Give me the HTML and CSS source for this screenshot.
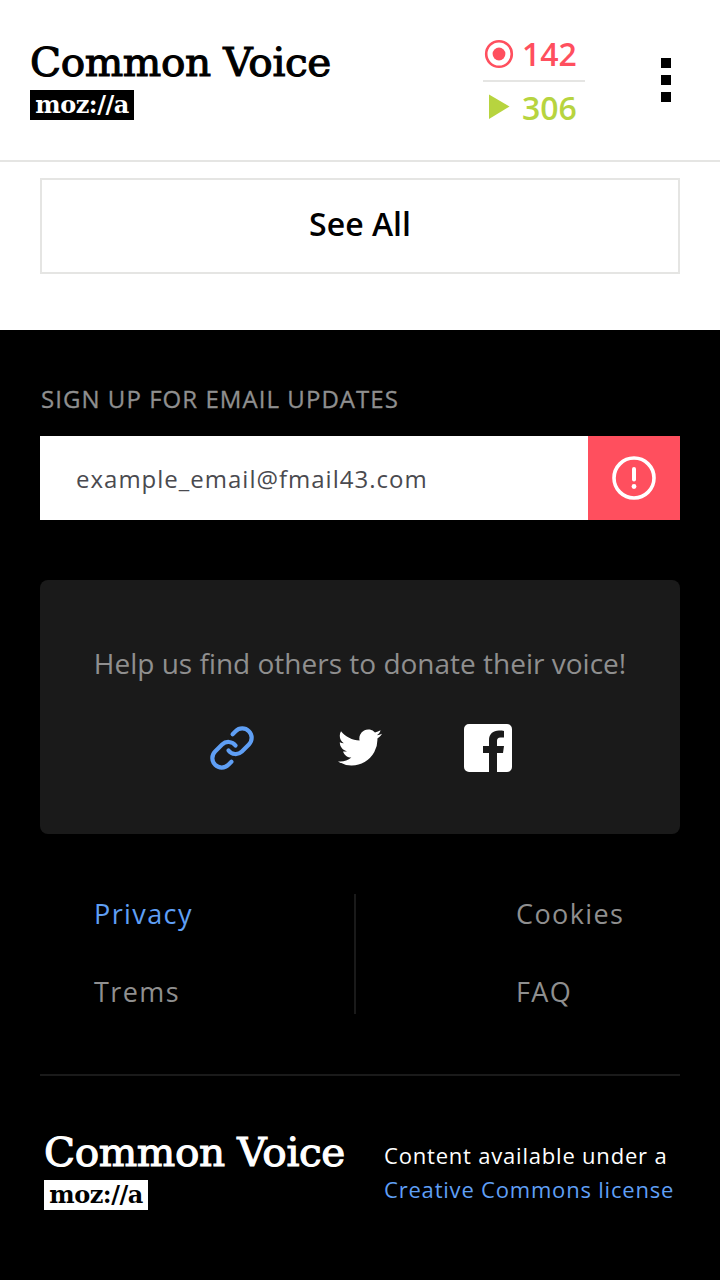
FILE: index.html
```html
<!DOCTYPE html>
<html lang="en">
<head>
  <meta charset="UTF-8" />
  <meta name="viewport" content="width=device-width, initial-scale=1.0" />
  <title>Common Voice</title>
  <link rel="stylesheet" href="styles.css">
</head>
<body>
  <header class="top">
    <div class="logo">
      <div class="logoName">Common Voice</div>
      <div class="logoMoz">moz://a</div>
    </div>
    <div class="stats">
      <div class="stat statRec">
        <svg class="statIcon" width="30" height="30" viewBox="0 0 30 30"><circle cx="15" cy="15" r="12.800" fill="none" stroke="#ff4f5e" stroke-width="2.600"/><circle cx="15" cy="15" r="6.400" fill="#ff4f5e"/></svg>
        <span>142</span>
      </div>
      <div class="stat statPlay">
        <svg class="statIcon" width="30" height="30" viewBox="0 0 30 30"><polygon points="5,2.500 25.500,14.500 5,27" fill="#b7d43f"/></svg>
        <span>306</span>
      </div>
    </div>
    <div class="dots"><i></i><i></i><i></i></div>
  </header>

  <section class="seeAllWrap">
    <button class="seeAll">See All</button>
  </section>

  <footer class="foot">
    <div class="signTitle">SIGN UP FOR EMAIL UPDATES</div>
    <div class="signRow">
      <div class="signInput">example_email@fmail43.com</div>
      <div class="signBtn">
        <svg width="44" height="44" viewBox="0 0 44 44"><circle cx="22" cy="22" r="20" fill="none" stroke="#fff" stroke-width="3.600"/><rect x="20" y="11" width="4" height="14.500" rx="2" fill="#fff"/><circle cx="22" cy="30.500" r="2.400" fill="#fff"/></svg>
      </div>
    </div>

    <div class="share">
      <p>Help us find others to donate their voice!</p>
      <div class="shareIcons">
        <svg width="48" height="48" viewBox="0 0 48 48" fill="none" stroke="#5f9ff5" stroke-width="4.200" stroke-linecap="round"><path d="M20.500 26.500a9 9 0 0 0 13.400 1l7-7a9.400 9.400 0 0 0-13.300-13.300l-3 3"/><path d="M27.500 21.500a9 9 0 0 0-13.400-1l-7 7a9.400 9.400 0 0 0 13.300 13.300l3-3"/></svg>
        <svg width="48" height="48" viewBox="0 0 24 24"><path fill="#fff" d="M23 4.900c-.8.400-1.700.600-2.600.700.900-.6 1.600-1.400 1.900-2.500-.9.500-1.800.900-2.800 1.100A4.500 4.500 0 0 0 11.800 8.300C8.100 8.100 4.700 6.300 2.500 3.600c-1.200 2.100-.6 4.700 1.400 6-.7 0-1.400-.2-2-.5 0 2.200 1.500 4.100 3.600 4.500-.7.200-1.400.2-2 .1.600 1.800 2.300 3.100 4.200 3.100A9 9 0 0 1 1 18.700a12.800 12.800 0 0 0 19.700-11.400c.9-.6 1.700-1.400 2.300-2.400z"/></svg>
        <svg width="48" height="48" viewBox="0 0 48 48"><path fill="#fff" d="M5 0h38a5 5 0 0 1 5 5v38a5 5 0 0 1-5 5H33V29h6l1-7h-7v-5c0-2 1-3.500 3.500-3.500H40V7c-1-.2-3-.4-5-.4-6 0-10 3.400-10 9.800V22h-6v7h6v19H5a5 5 0 0 1-5-5V5a5 5 0 0 1 5-5z"/></svg>
      </div>
    </div>

    <nav class="links">
      <div class="linkCol">
        <a class="active">Privacy</a>
        <a>Trems</a>
      </div>
      <div class="linkCol linkColRight">
        <a>Cookies</a>
        <a>FAQ</a>
      </div>
    </nav>

    <div class="bottom">
      <div class="logo logoDark">
        <div class="logoName">Common Voice</div>
        <div class="logoMoz">moz://a</div>
      </div>
      <p class="license">Content available under a <a>Creative Commons license</a></p>
    </div>
  </footer>
</body>
</html>
```

FILE: styles.css
```css
* {
  box-sizing: border-box;
  margin: 0;
  padding: 0;
}

html, body {
  background: #fff;
  font-family: 'Open Sans', sans-serif;
  color: #000;
}

body {
  width: 720px;
  height: 1280px;
  overflow: hidden;
}

.top {
  height: 162px;
  border-bottom: 2px solid #e5e5e3;
  display: flex;
  align-items: flex-start;
  padding: 40px 0 0 30px;
}

.logo {
  width: 301px;
  flex-shrink: 0;
}

.logoName {
  font-family: 'DejaVu Serif', serif;
  font-weight: 400;
  font-size: 40px;
  line-height: 44px;
  white-space: nowrap;
  -webkit-text-stroke: 1.1px currentColor;
  transform: scaleX(1.015);
  transform-origin: left center;
  letter-spacing: -.4px;
}

.logoMoz {
  width: 104px;
  height: 30px;
  margin-top: 6px;
  background: #000;
  color: #fff;
  font-family: 'DejaVu Serif', serif;
  font-weight: 700;
  font-size: 24px;
  line-height: 29px;
  text-align: center;
  white-space: nowrap;
  letter-spacing: -.5px;
}

.logoDark .logoName { color: #fff; }

.logoDark .logoMoz {
  background: #fff;
  color: #000;
}

.stats {
  width: 102px;
  margin-left: 152px;
  margin-top: -14px;
}

.stat {
  height: 54px;
  display: flex;
  align-items: center;
  font-size: 32px;
  font-weight: 600;
  padding-left: 1px;
  gap: 8px;
}

.statRec {
  color: #ff4f5e;
  height: 56px;
  padding-top: 1px;
  border-bottom: 2px solid #e5e5e3;
}

.statPlay {
  color: #b7d43f;
  margin-top: -2px;
}

.dots {
  margin-left: 76px;
  margin-top: 18px;
  display: flex;
  flex-direction: column;
  gap: 7px;
}

.dots i {
  display: block;
  width: 10px;
  height: 10px;
  background: #000;
}

.seeAllWrap {
  height: 168px;
  padding: 16px 40px 0;
}

.seeAll {
  width: 100%;
  height: 96px;
  padding-bottom: 5px;
  background: #fff;
  border: 2px solid #e5e5e3;
  font-family: 'Open Sans', sans-serif;
  font-size: 32px;
  font-weight: 600;
  color: #000;
}

.foot {
  background: #000;
  height: 950px;
  padding: 54px 40px 0;
}

.signTitle {
  color: #8f8f8f;
  font-size: 24px;
  line-height: 30px;
  letter-spacing: 1.05px;
  -webkit-text-stroke: .3px currentColor;
  padding-left: 1px;
  white-space: nowrap;
}

.signRow {
  display: flex;
  height: 84px;
  margin-top: 22px;
}

.signInput {
  flex: 1;
  background: #fff;
  color: #4a4a4f;
  font-size: 24px;
  line-height: 86px;
  letter-spacing: 1px;
  padding-left: 36px;
}

.signBtn {
  width: 92px;
  background: #ff4f5e;
  display: flex;
  align-items: center;
  justify-content: center;
}

.share {
  height: 254px;
  margin-top: 60px;
  background: #1a1a1a;
  border-radius: 8px;
  text-align: center;
  padding-top: 63px;
}

.share p {
  color: #8f8f8f;
  font-size: 28px;
  line-height: 40px;
}

.shareIcons {
  display: flex;
  justify-content: center;
  gap: 80px;
  margin-top: 41px;
}

.links {
  display: flex;
  height: 120px;
  margin-top: 60px;
}

.linkCol {
  display: flex;
  flex-direction: column;
  gap: 38px;
  width: 316px;
  height: 120px;
  padding-left: 54px;
  border-right: 2px solid #1a1a1a;
}

.linkColRight {
  flex: 1;
  border-right: none;
  padding-left: 160px;
}

.links a {
  display: block;
  color: #8f8f8f;
  font-size: 27px;
  line-height: 40px;
  letter-spacing: 1.4px;
}

.links a.active { color: #5f9ff5; }

.bottom {
  display: flex;
  margin-top: 60px;
  border-top: 2px solid #1a1a1a;
  padding: 54px 0 0 4px;
}

.license {
  margin-left: 39px;
  padding-top: 8px;
  color: #fff;
  font-size: 22px;
  line-height: 34px;
  letter-spacing: .8px;
  white-space: nowrap;
}

.license a {
  display: block;
  color: #5f9ff5;
}
```
